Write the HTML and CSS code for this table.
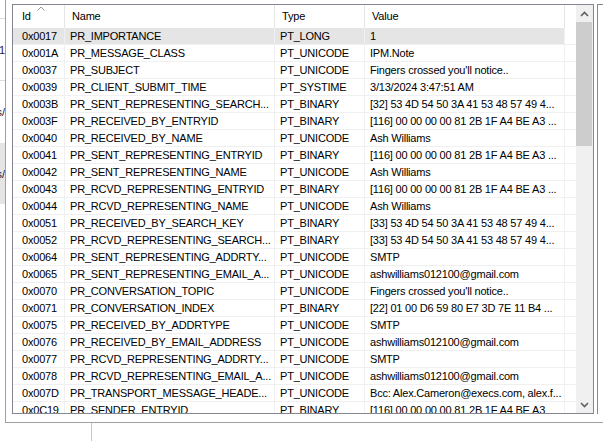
FILE: index.html
```html
<!DOCTYPE html>
<html>
<head>
<meta charset="utf-8">
<link rel="stylesheet" href="styles.css">
</head>
<body>
<div class="screen">
  <div class="remnant">
    <div class="rm-a"></div>
    <div class="rm-line"></div>
    <div class="rm-b"><span>'1</span></div>
    <div class="rm-line"></div>
    <div class="rm-c"><span>s/</span></div>
    <div class="rm-d"><span>s/</span></div>
  </div>
  <div class="main">
    <div class="frame">
      <div class="list">
        <div class="grid">
          <div class="row head">
            <div class="c id sorted">Id<svg class="sort" width="8" height="5" viewBox="0 0 8 5"><polyline points="0.5,4.5 4,1 7.5,4.5" fill="none" stroke="#9a9a9a" stroke-width="1"/></svg></div>
            <div class="c name">Name</div>
            <div class="c type">Type</div>
            <div class="c value">Value</div>
            <div class="c fill"></div>
          </div>
          <div class="row sel"><div class="c id">0x0017</div><div class="c name">PR_IMPORTANCE</div><div class="c type">PT_LONG</div><div class="c value">1</div><div class="c fill"></div></div>
          <div class="row"><div class="c id">0x001A</div><div class="c name">PR_MESSAGE_CLASS</div><div class="c type">PT_UNICODE</div><div class="c value">IPM.Note</div><div class="c fill"></div></div>
          <div class="row"><div class="c id">0x0037</div><div class="c name">PR_SUBJECT</div><div class="c type">PT_UNICODE</div><div class="c value">Fingers crossed you'll notice..</div><div class="c fill"></div></div>
          <div class="row"><div class="c id">0x0039</div><div class="c name">PR_CLIENT_SUBMIT_TIME</div><div class="c type">PT_SYSTIME</div><div class="c value">3/13/2024 3:47:51 AM</div><div class="c fill"></div></div>
          <div class="row"><div class="c id">0x003B</div><div class="c name">PR_SENT_REPRESENTING_SEARCH...</div><div class="c type">PT_BINARY</div><div class="c value">[32] 53 4D 54 50 3A 41 53 48 57 49 4...</div><div class="c fill"></div></div>
          <div class="row"><div class="c id">0x003F</div><div class="c name">PR_RECEIVED_BY_ENTRYID</div><div class="c type">PT_BINARY</div><div class="c value">[116] 00 00 00 00 81 2B 1F A4 BE A3 ...</div><div class="c fill"></div></div>
          <div class="row"><div class="c id">0x0040</div><div class="c name">PR_RECEIVED_BY_NAME</div><div class="c type">PT_UNICODE</div><div class="c value">Ash Williams</div><div class="c fill"></div></div>
          <div class="row"><div class="c id">0x0041</div><div class="c name">PR_SENT_REPRESENTING_ENTRYID</div><div class="c type">PT_BINARY</div><div class="c value">[116] 00 00 00 00 81 2B 1F A4 BE A3 ...</div><div class="c fill"></div></div>
          <div class="row"><div class="c id">0x0042</div><div class="c name">PR_SENT_REPRESENTING_NAME</div><div class="c type">PT_UNICODE</div><div class="c value">Ash Williams</div><div class="c fill"></div></div>
          <div class="row"><div class="c id">0x0043</div><div class="c name">PR_RCVD_REPRESENTING_ENTRYID</div><div class="c type">PT_BINARY</div><div class="c value">[116] 00 00 00 00 81 2B 1F A4 BE A3 ...</div><div class="c fill"></div></div>
          <div class="row"><div class="c id">0x0044</div><div class="c name">PR_RCVD_REPRESENTING_NAME</div><div class="c type">PT_UNICODE</div><div class="c value">Ash Williams</div><div class="c fill"></div></div>
          <div class="row"><div class="c id">0x0051</div><div class="c name">PR_RECEIVED_BY_SEARCH_KEY</div><div class="c type">PT_BINARY</div><div class="c value">[33] 53 4D 54 50 3A 41 53 48 57 49 4...</div><div class="c fill"></div></div>
          <div class="row"><div class="c id">0x0052</div><div class="c name">PR_RCVD_REPRESENTING_SEARCH...</div><div class="c type">PT_BINARY</div><div class="c value">[33] 53 4D 54 50 3A 41 53 48 57 49 4...</div><div class="c fill"></div></div>
          <div class="row"><div class="c id">0x0064</div><div class="c name">PR_SENT_REPRESENTING_ADDRTY...</div><div class="c type">PT_UNICODE</div><div class="c value">SMTP</div><div class="c fill"></div></div>
          <div class="row"><div class="c id">0x0065</div><div class="c name">PR_SENT_REPRESENTING_EMAIL_A...</div><div class="c type">PT_UNICODE</div><div class="c value">ashwilliams012100@gmail.com</div><div class="c fill"></div></div>
          <div class="row"><div class="c id">0x0070</div><div class="c name">PR_CONVERSATION_TOPIC</div><div class="c type">PT_UNICODE</div><div class="c value">Fingers crossed you'll notice..</div><div class="c fill"></div></div>
          <div class="row"><div class="c id">0x0071</div><div class="c name">PR_CONVERSATION_INDEX</div><div class="c type">PT_BINARY</div><div class="c value">[22] 01 00 D6 59 80 E7 3D 7E 11 B4 ...</div><div class="c fill"></div></div>
          <div class="row"><div class="c id">0x0075</div><div class="c name">PR_RECEIVED_BY_ADDRTYPE</div><div class="c type">PT_UNICODE</div><div class="c value">SMTP</div><div class="c fill"></div></div>
          <div class="row"><div class="c id">0x0076</div><div class="c name">PR_RECEIVED_BY_EMAIL_ADDRESS</div><div class="c type">PT_UNICODE</div><div class="c value">ashwilliams012100@gmail.com</div><div class="c fill"></div></div>
          <div class="row"><div class="c id">0x0077</div><div class="c name">PR_RCVD_REPRESENTING_ADDRTY...</div><div class="c type">PT_UNICODE</div><div class="c value">SMTP</div><div class="c fill"></div></div>
          <div class="row"><div class="c id">0x0078</div><div class="c name">PR_RCVD_REPRESENTING_EMAIL_A...</div><div class="c type">PT_UNICODE</div><div class="c value">ashwilliams012100@gmail.com</div><div class="c fill"></div></div>
          <div class="row"><div class="c id">0x007D</div><div class="c name">PR_TRANSPORT_MESSAGE_HEADE...</div><div class="c type">PT_UNICODE</div><div class="c value">Bcc: Alex.Cameron@execs.com, alex.f...</div><div class="c fill"></div></div>
          <div class="row"><div class="c id">0x0C19</div><div class="c name">PR_SENDER_ENTRYID</div><div class="c type">PT_BINARY</div><div class="c value">[116] 00 00 00 00 81 2B 1F A4 BE A3</div><div class="c fill"></div></div>
        </div>
        <div class="scrollbar">
          <div class="sb-btn"><svg width="9" height="6" viewBox="0 0 9 6"><polyline points="1,5 4.5,1.5 8,5" fill="none" stroke="#606060" stroke-width="1.6"/></svg></div>
          <div class="sb-track"><div class="sb-thumb"></div></div>
          <div class="sb-btn"><svg width="9" height="6" viewBox="0 0 9 6"><polyline points="1,1 4.5,4.5 8,1" fill="none" stroke="#606060" stroke-width="1.6"/></svg></div>
        </div>
      </div>
      <div class="gap"></div>
      <div class="other"></div>
    </div>
    <div class="below"><div class="vline"></div></div>
  </div>
</div>
</body>
</html>
```

FILE: styles.css
```css
* { box-sizing: border-box; }
html, body { margin: 0; padding: 0; }
body {
  width: 603px;
  height: 441px;
  overflow: hidden;
  background: #ffffff;
  font-family: "Liberation Sans", Arial, sans-serif;
  font-size: 11px;
  color: #000;
}
.screen { display: flex; height: 441px; }

.remnant { width: 5px; display: flex; flex-direction: column; overflow: hidden; }
.rm-a { height: 18px; }
.rm-line { height: 1px; background: #dcdcdc; }
.rm-b, .rm-c, .rm-d {
  display: flex; justify-content: flex-end; align-items: center;
  white-space: nowrap; overflow: hidden; color: #1a1a3a;
}
.rm-b { height: 61px; }
.rm-c { height: 62px; }
.rm-d { height: 61px; background: #e5e5e5; }

.main { flex: 1; display: flex; flex-direction: column; min-width: 0; }
.frame {
  height: 423px;
  border-left: 1px solid #a0a0a0;
  border-bottom: 1px solid #a0a0a0;
  padding: 4px 0 0 6px;
  display: flex;
  align-items: flex-start;
}
.list {
  width: 582px;
  height: 410px;
  border: 1px solid #828790;
  display: flex;
  background: #fff;
  flex-shrink: 0;
}
.grid { width: 563px; overflow: hidden; letter-spacing: -0.2px; }
.row { display: flex; height: 17px; border-bottom: 1px solid #f0f0f0; }
.row .c {
  height: 16px; line-height: 16px; white-space: nowrap; overflow: hidden;
  border-right: 1px solid #f0f0f0; padding-left: 5px;
}
.row .c.fill { border-right: 0; }
.c.id { width: 52px; padding-left: 9px; }
.c.name { width: 210px; }
.c.type { width: 90px; }
.c.value { width: 200px; }
.c.fill { width: 11px; }
.row.sel .c:not(.fill) { background: #e5e5e5; }
.row.sel .c.fill { background: #fff; }

.row.head { height: 23px; border-bottom: 0; }
.row.head .c {
  height: 23px; line-height: 22px; border-right: 1px solid #e5e5e5; padding-left: 7px;
}
.row.head .c.id { padding-left: 9px; position: relative; }
.row.head .c.fill { border-right: 0; }
.sort { position: absolute; left: 24px; top: 1px; }

.scrollbar { width: 17px; display: flex; flex-direction: column; background: #f0f0f0; }
.sb-btn { height: 17px; display: flex; align-items: center; justify-content: center; }
.sb-track { flex: 1; }
.sb-thumb { height: 124px; margin: 0 1px 0 0; background: #cdcdcd; }

.gap { width: 3px; }
.other {
  flex: 1; height: 410px;
  border-left: 1px solid #828790;
  border-top: 1px solid #828790;
}
.below { height: 18px; padding-left: 86px; }
.vline { width: 1px; height: 18px; background: #c8c8c8; }
```
